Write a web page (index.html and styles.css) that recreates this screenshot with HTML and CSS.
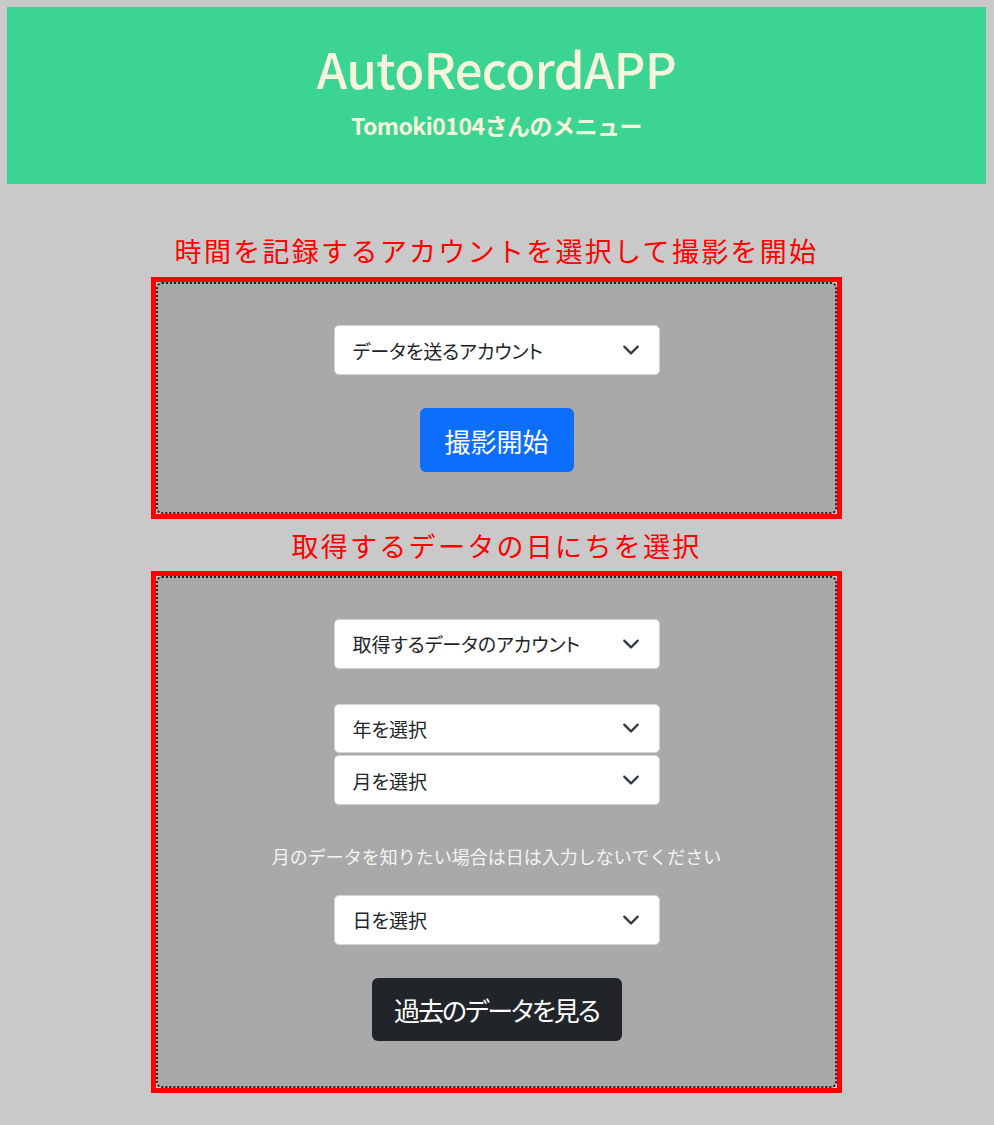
FILE: index.html
```html
<!DOCTYPE html>
<html lang="ja">
<head>
<meta charset="utf-8">
<title>AutoRecordAPP</title>
<link rel="stylesheet" href="styles.css">
</head>
<body>
<header class="hero">
  <h1 class="hero-title">AutoRecordAPP</h1>
  <p class="hero-sub">Tomoki0104さんのメニュー</p>
</header>
<main class="main">
  <h2 class="section-label">時間を記録するアカウントを選択して撮影を開始</h2>
  <section class="frame">
    <div class="panel panel-record">
      <select class="picker">
        <option>データを送るアカウント</option>
      </select>
      <button class="btn btn-primary">撮影開始</button>
    </div>
  </section>
  <h2 class="section-label label-second">取得するデータの日にちを選択</h2>
  <section class="frame">
    <div class="panel panel-history">
      <select class="picker">
        <option>取得するデータのアカウント</option>
      </select>
      <select class="picker picker-year">
        <option>年を選択</option>
      </select>
      <select class="picker picker-month">
        <option>月を選択</option>
      </select>
      <p class="note">月のデータを知りたい場合は日は入力しないでください</p>
      <select class="picker">
        <option>日を選択</option>
      </select>
      <button class="btn btn-dark">過去のデータを見る</button>
    </div>
  </section>
</main>
</body>
</html>
```
FILE: styles.css
```css
html, body {
  background: #c9c9c9;
}
body {
  margin: 7px 8px 0 7px;
  font-family: "Noto Sans CJK JP", "Noto Sans", sans-serif;
  color: #212529;
}
.hero {
  background: #3bd493;
  height: 177px;
  box-sizing: border-box;
  padding-top: 30px;
  text-align: center;
  color: #f7f5dc;
}
.hero-title {
  margin: 0;
  font-size: 49px;
  font-weight: 500;
  line-height: 62px;
  letter-spacing: -0.6px;
}
.hero-sub {
  margin: 8px 0 0;
  font-size: 23px;
  font-weight: 700;
  line-height: 36px;
  letter-spacing: -0.5px;
}
.main {
  display: flex;
  flex-direction: column;
  align-items: center;
  padding-top: 49px;
  padding-bottom: 32px;
}
.section-label {
  margin: 0 0 8px;
  color: #ff0000;
  font-size: 27px;
  font-weight: 400;
  line-height: 36px;
  letter-spacing: 2.3px;
}
.label-second {
  margin: 9px 0 7px;
}
.frame {
  width: 691px;
  box-sizing: border-box;
  border: 5px solid #ff0000;
  background: #c9c9c9;
}
.panel {
  display: flex;
  flex-direction: column;
  align-items: center;
  border: 2px dotted #222222;
  border-radius: 6px;
  background: #a9a9a9;
}
.panel-record {
  padding: 41px 0 40px;
  height: 232px;
  box-sizing: border-box;
}
.panel-history {
  padding: 41px 0 45px;
  height: 512px;
  box-sizing: border-box;
}
.picker {
  appearance: none;
  -webkit-appearance: none;
  width: 326px;
  height: 50px;
  box-sizing: border-box;
  padding: 0 44px 0 18px;
  border: 1px solid #ced4da;
  border-radius: 5px;
  background-color: #ffffff;
  background-image: url("data:image/svg+xml,%3csvg xmlns='http://www.w3.org/2000/svg' viewBox='0 0 16 16'%3e%3cpath fill='none' stroke='%23343a40' stroke-linecap='round' stroke-linejoin='round' stroke-width='2' d='m2 5 6 6 6-6'/%3e%3c/svg%3e");
  background-repeat: no-repeat;
  background-position: right 19px center;
  background-size: 18px 18px;
  font-family: "Noto Sans CJK JP", "Noto Sans", sans-serif;
  font-size: 19px;
  font-feature-settings: "palt";
  color: #212529;
}
.picker-year {
  margin-top: 35px;
}
.picker-month {
  margin-top: 2px;
}
.note {
  margin: 37px 0 0;
  color: #f4f4f4;
  font-size: 18px;
  line-height: 28px;
  letter-spacing: 0;
}
.panel-history .note + .picker {
  margin-top: 25px;
}
.btn {
  margin-top: 33px;
  height: 64px;
  border: 0;
  border-radius: 6px;
  font-family: "Noto Sans CJK JP", "Noto Sans", sans-serif;
  font-size: 26px;
  color: #ffffff;
  cursor: pointer;
}
.btn-primary {
  width: 154px;
  background: #0d6efd;
}
.btn-dark {
  width: 250px;
  background: #212529;
  font-feature-settings: "palt";
  letter-spacing: -2px;
}
```
